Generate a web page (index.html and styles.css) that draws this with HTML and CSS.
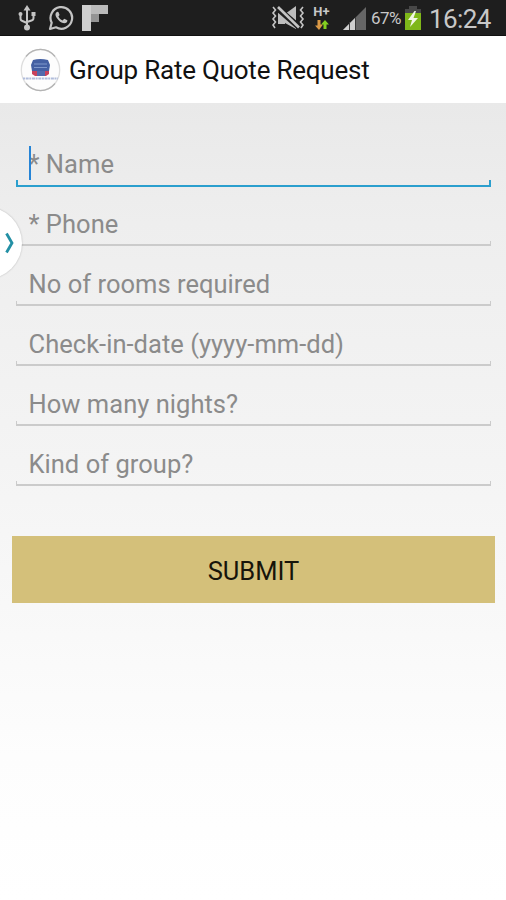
FILE: index.html
```
<!DOCTYPE html>
<html lang="en">
<head>
    <meta charset="UTF-8">
    <meta name="viewport" content="width=device-width, initial-scale=1.0">
    <title>Group Rate Quote Request</title>
    <link rel="stylesheet" href="styles.css">
</head>
<body>
    <div class="status-bar">
        <div class="status-left">
            <!-- USB -->
            <svg class="icon-usb" width="18" height="26" viewBox="0 0 18 26" fill="none" stroke="#c4c4c4" stroke-width="2">
                <path d="M9 4v18M2.500 9v4.500q0 2 2 2.500l4.500 2M15.500 9v4q0 2-2 2.500L9 17"/>
                <path d="M9 0l3.500 5.500h-7z" fill="#c4c4c4" stroke="none"/>
                <circle cx="9" cy="22.500" r="3" fill="#c4c4c4" stroke="none"/>
                <circle cx="2.500" cy="9" r="2" fill="#c4c4c4" stroke="none"/>
                <path d="M13.500 7h4v4h-4z" fill="#c4c4c4" stroke="none"/>
            </svg>
            <!-- WhatsApp -->
            <svg class="icon-chat" width="26" height="26" viewBox="0 0 26 26">
                <path d="M2 24l1.700-6.200A10.800 10.800 0 1 1 8 22.300z" fill="none" stroke="#c4c4c4" stroke-width="2.200" stroke-linejoin="round"/>
                <path d="M9.300 6.800c-2.300 1-2.300 3.700-.5 6.200 2 3 4.500 5 7.400 5.300 2 0 3.300-1.300 3.200-3l-3.200-1.600-1.600 1.700c-2-.8-3.300-2-4.200-4l1.200-1.500-1.200-3z" fill="#c4c4c4"/>
            </svg>
            <!-- Flipboard -->
            <svg class="icon-flip" width="27" height="27" viewBox="0 0 27 27">
                <path d="M0 0h9v26H0z" fill="#cecece"/>
                <path d="M9 0h17v9H9z" fill="#bababa"/>
                <path d="M9 9h8v8H9z" fill="#949494"/>
            </svg>
        </div>
        <div class="status-right">
            <!-- Vibrate / mute -->
            <svg class="icon-mute" width="34" height="24" viewBox="0 0 34 24">
                <path d="M7 7h7v11H7zM14 8l11-8v23l-11-6z" fill="#bdbdbd"/>
                <path d="M5 1l23 20" stroke="#1e1e1e" stroke-width="6"/>
                <path d="M7 1l21 20.500" stroke="#c4c4c4" stroke-width="2.600"/>
                <path d="M7 10l7 7H7z" fill="#bdbdbd"/>
                <path d="M2 1l2.500 3L2 7l2.500 3L2 13l2.500 3L2 19l2 3M32 1l-2.500 3L32 7l-2.500 3 2.500 3-2.500 3 2.500 3-2 3" fill="none" stroke="#c4c4c4" stroke-width="1.600"/>
            </svg>
            <div class="network">
                <span class="network-type">H+</span>
                <svg width="14" height="10" viewBox="0 0 14 10">
                    <path d="M2.500 0h3v4.500H8L4 10 0 5.500h2.500z" fill="#d99845"/>
                    <path d="M8.500 9h3V4.500H14L10 0 6 4.500h2.500z" fill="#83cf20"/>
                </svg>
            </div>
            <!-- Signal strength -->
            <svg class="icon-signal" width="24" height="23" viewBox="0 0 24 23">
                <path d="M0 23L23 0v23z" fill="#666"/>
                <path d="M0 23l12-12V23z" fill="#d0d0d0"/>
                <path d="M6.500 15v8M12.500 10v13" stroke="#3b3b3b" stroke-width="1"/>
            </svg>
            <span class="battery-text">67%</span>
            <!-- Battery -->
            <svg class="icon-battery" width="18" height="24" viewBox="0 0 18 24">
                <path d="M5 0h8v3h4v21H1V3h4z" fill="#484848"/>
                <path d="M1 7h16v17H1z" fill="#7fb719"/>
                <path d="M10.500 5L4 14h4l-2 7 8-9H9.500l2.500-7z" fill="#f2f6e5"/>
            </svg>
            <span class="clock">16:24</span>
        </div>
    </div>

    <div class="action-bar">
        <svg class="logo" width="42" height="44" viewBox="0 0 42 44">
            <ellipse cx="20.500" cy="22" rx="19.200" ry="20.500" fill="#fdfdfd" stroke="#dedede" stroke-width="1.300"/>
            <path d="M6 8.500A19.200 20.500 0 0 1 35 8.500M6 35.500a19.200 20.500 0 0 0 29 0" fill="none" stroke="#b4b4b4" stroke-width="1.200"/>
            <path d="M12 22h17v4l-3 2H15l-3-2z" fill="#c8425c"/>
            <path d="M13 12q7-2 15 0l2 5-1 6H12l-1-6z" fill="#4460a3"/>
            <path d="M14 16h13M14 19.500h13" stroke="#7f98cb" stroke-width="1.200"/>
            <path d="M17 23h8v5h-8z" fill="#536bad"/>
            <path d="M3 30.500h35" stroke="#b1bddb" stroke-width="2.200" stroke-dasharray="2 .7 3 .6"/>
        </svg>
        <h1>Group Rate Quote Request</h1>
    </div>

    <form class="quote-form">
        <label class="field focused">
            <input type="text" placeholder="* Name">
            <span class="cursor"></span>
            <span class="line"></span>
        </label>
        <label class="field">
            <input type="text" placeholder="* Phone">
            <span class="line"></span>
        </label>
        <label class="field">
            <input type="text" placeholder="No of rooms required">
            <span class="line"></span>
        </label>
        <label class="field">
            <input type="text" placeholder="Check-in-date (yyyy-mm-dd)">
            <span class="line"></span>
        </label>
        <label class="field">
            <input type="text" placeholder="How many nights?">
            <span class="line"></span>
        </label>
        <label class="field">
            <input type="text" placeholder="Kind of group?">
            <span class="line"></span>
        </label>
        <button type="button" class="submit">SUBMIT</button>
    </form>

    <!-- Side panel handle -->
    <div class="handle">
        <svg width="10" height="22" viewBox="0 0 10 22">
            <path d="M1.500 1.500L7 11l-5.500 9.500" fill="none" stroke="#2390a5" stroke-width="2.800"/>
        </svg>
    </div>
</body>
</html>
```

FILE: styles.css
```
* {
    box-sizing: border-box;
}

body {
    margin: 0;
    height: 900px;
    display: flex;
    flex-direction: column;
    position: relative;
    overflow: hidden;
    font-family: Roboto, "Liberation Sans", sans-serif;
    background: #fff;
}

.status-bar {
    height: 36px;
    flex: none;
    display: flex;
    justify-content: space-between;
    background-color: #1e1e1e;
    border-bottom: 1px solid #111;
    color: #c8c8c8;
}

.status-left,
.status-right {
    display: flex;
    align-items: flex-start;
}

.status-left {
    padding-left: 18px;
}

.status-right {
    padding-right: 15px;
}

.icon-usb {
    margin-top: 5px;
}

.icon-chat {
    margin: 5px 0 0 12px;
}

.icon-flip {
    margin: 5px 0 0 8px;
}

.icon-mute {
    margin-top: 6px;
}

.network {
    width: 17px;
    margin: 6px 0 0 8px;
    display: flex;
    flex-direction: column;
    align-items: center;
    gap: 2px;
}

.network-type {
    font-size: 13px;
    font-weight: 700;
    line-height: 12px;
}

.icon-signal {
    margin: 7px 0 0 13px;
}

.battery-text {
    width: 32px;
    margin: 8px 0 0 4px;
    font-size: 17px;
    line-height: 20px;
    letter-spacing: -0.6px;
}

.icon-battery {
    margin: 6px 0 0 1px;
}

.clock {
    margin: 5px 0 0 7px;
    font-size: 26px;
    line-height: 28px;
    width: 62px;
    letter-spacing: -0.6px;
}

.action-bar {
    height: 67px;
    flex: none;
    display: flex;
    align-items: center;
    padding-left: 20px;
    background-color: #fff;
}

.action-bar h1 {
    margin: 1px 0 0 7px;
    font-size: 26px;
    font-weight: 400;
    line-height: 32px;
    letter-spacing: -0.22px;
    white-space: nowrap;
    color: #111;
}

.quote-form {
    flex: 1;
    display: flex;
    flex-direction: column;
    padding: 24px 11px 0 12px;
    background: linear-gradient(#e9e9e9, #eee 15%, #f4f4f4 45%, #f8f8f8 63%, #fdfdfd 82%, #fff 100%);
}

.field {
    position: relative;
    height: 60px;
    margin: 0 4px;
    display: flex;
    flex-direction: column;
}

.field input {
    width: 100%;
    height: 54px;
    padding: 20px 12px 0 12.5px;
    border: 0;
    outline: 0;
    background: transparent;
    font-family: inherit;
    font-size: 25.5px;
    letter-spacing: 0.03px;
    color: #222;
}

.field input::placeholder {
    color: #8b8b8b;
    opacity: 1;
}

.line {
    height: 5px;
    border: 1px solid #cbcbcb;
    border-width: 0 1px 2px;
}

.focused .line {
    height: 7px;
    margin-top: -1px;
    border-color: #2b9fce;
    border-width: 0 2px 2px;
}

.cursor {
    position: absolute;
    left: 13px;
    top: 19px;
    width: 2px;
    height: 34px;
    background-color: #2684d6;
}

.submit {
    height: 67px;
    margin-top: 49px;
    padding: 3px 0 0;
    border: 0;
    background-color: #d4c07a;
    font-family: inherit;
    font-size: 25.5px;
    color: #17140a;
}

.handle {
    position: absolute;
    left: -50px;
    top: 207px;
    width: 72px;
    height: 72px;
    display: flex;
    align-items: center;
    justify-content: flex-end;
    padding-right: 7px;
    border-radius: 50%;
    background-color: #fff;
    box-shadow: 0 0 2px rgba(0, 0, 0, 0.25);
}
```
